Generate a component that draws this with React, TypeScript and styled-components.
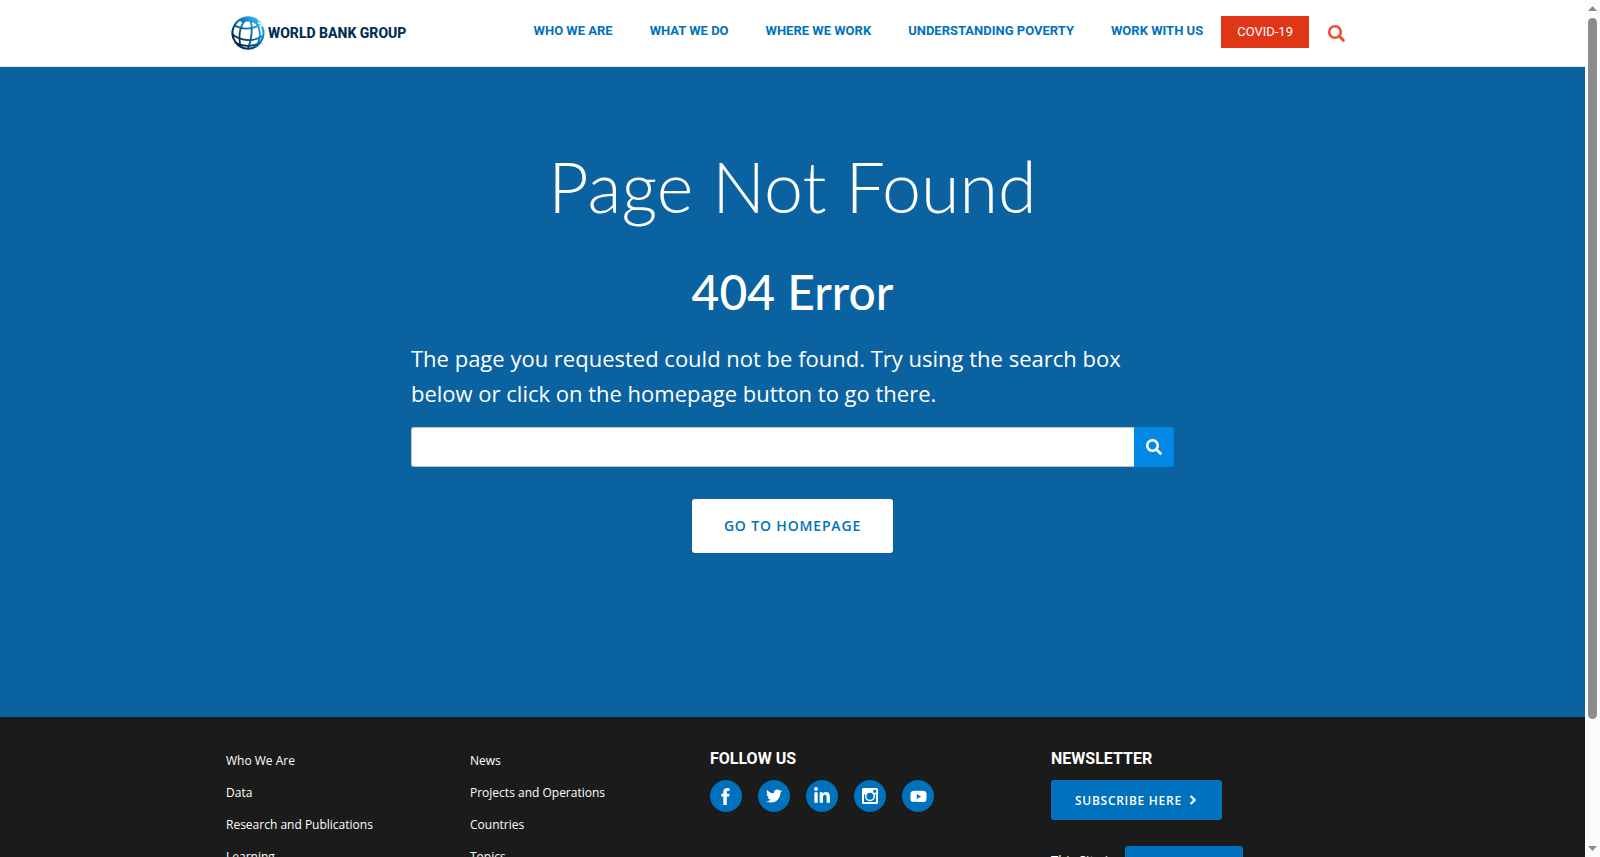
import React from 'react';
import styled, { createGlobalStyle } from 'styled-components';
import {
  FaChevronRight,
  FaLinkedinIn,
  FaSearch,
  FaTwitter,
  FaYoutube,
} from 'react-icons/fa';

const body = '"Open Sans", "Noto Sans", sans-serif';
const heading = 'Lato, "Open Sans", sans-serif';
const label = 'Roboto, "Open Sans", sans-serif';

const GlobalStyle = createGlobalStyle`
  *, *::before, *::after { box-sizing: border-box; }
  body { margin: 0; font-family: ${body}; color: #fff; background: #fff; }
  a { color: inherit; text-decoration: none; }
  h1, h2, p, ul { margin: 0; padding: 0; }
  ul { list-style: none; }
  button, input, select { font: inherit; }
`;

const Viewport = styled.div`
  display: flex;
  height: 100vh;
  overflow: hidden;
`;

const Page = styled.div`
  flex: 1;
  min-width: 0;
  overflow: hidden;
`;

const ScrollTrack = styled.div`
  width: 15px;
  display: flex;
  flex-direction: column;
  align-items: center;
  gap: 7px;
  padding: 6px 0;
  background: #fcfcfc;
`;

const ScrollThumb = styled.div`
  flex: 1;
  width: 9px;
  margin-bottom: 120px;
  border-radius: 5px;
  background: #8b8b8b;
`;

const Header = styled.header`
  background: #fff;
  border-bottom: 1px solid #e3e3e3;
`;

const Container = styled.div`
  width: 100%;
  max-width: 1133px;
  margin: 0 auto;
`;

const HeaderRow = styled(Container)`
  display: flex;
  align-items: flex-start;
  justify-content: space-between;
  height: 66px;
  padding: 16px 13px 0 4px;
`;

const Brand = styled.a`
  display: flex;
  align-items: center;
  gap: 2px;
  height: 34px;
  font: 800 14px/20px ${label};
  color: #002f54;
  white-space: nowrap;
`;

const Nav = styled.nav`
  display: flex;
  align-items: flex-start;
`;

const NavLink = styled.a`
  padding: 0 18px 0 19px;
  font: 700 13px/30px ${label};
  color: #0071bc;
  white-space: nowrap;
`;

const CovidLink = styled(NavLink)`
  padding: 0 16px;
  font-weight: 400;
  line-height: 32px;
  background: #e13517;
  color: #fff;
`;

const HeaderSearch = styled.button`
  display: flex;
  margin: 8px 0 0 18px;
  padding: 0;
  border: 0;
  background: none;
  color: #ee4d34;
`;

const Hero = styled.main`
  display: flex;
  justify-content: center;
  padding: 77px 24px 164px;
  background: #0a62a1;
`;

const HeroColumn = styled.div`
  width: 763px;
  display: flex;
  flex-direction: column;
  align-items: center;
`;

const Title = styled.h1`
  font: 300 70px/84px ${heading};
`;

const Subtitle = styled.h2`
  margin-top: 32px;
  font: 500 48px/64px ${heading};
`;

const Message = styled.p`
  align-self: stretch;
  margin-top: 17px;
  font-size: 22px;
  line-height: 35px;
`;

const SearchForm = styled.form`
  align-self: stretch;
  display: flex;
  height: 40px;
  margin-top: 16px;
`;

const SearchInput = styled.input`
  flex: 1;
  min-width: 0;
  padding: 0 12px;
  border: 1px solid #c4c4c4;
  border-right: 0;
  border-radius: 3px 0 0 3px;
  background: #fff;
  color: #333;
`;

const SearchButton = styled.button`
  display: flex;
  align-items: center;
  justify-content: center;
  width: 40px;
  padding: 0;
  border: 0;
  border-radius: 0 3px 3px 0;
  background: #0288e5;
  color: #fff;
  font-size: 16px;
`;

const HomeLink = styled.a`
  margin-top: 32px;
  padding: 0 32px;
  border-radius: 3px;
  background: #fff;
  color: #0071bc;
  font-size: 14px;
  font-weight: 600;
  line-height: 54px;
  letter-spacing: 0.06em;
`;

const Footer = styled.footer`
  background: #1b1b1b;
`;

const FooterGrid = styled(Container)`
  display: grid;
  grid-template-columns: 244fr 240fr 341fr 308fr;
  padding: 28px 0 32px;
`;

const LinkList = styled.ul`
  font-size: 12px;
  line-height: 32px;
`;

const FooterHeading = styled.h2`
  margin: 2px 0 9px;
  font: 700 16px/24px ${label};
`;

const SocialList = styled.ul`
  display: flex;
  gap: 16px;
`;

const SocialLink = styled.a<{ $size: number }>`
  display: flex;
  align-items: center;
  justify-content: center;
  width: 32px;
  height: 32px;
  border-radius: 50%;
  background: #0071bc;
  font-size: ${(p) => p.$size}px;
`;

const SubscribeLink = styled.a`
  display: inline-flex;
  align-items: center;
  gap: 6px;
  height: 40px;
  padding: 0 24px;
  border-radius: 3px;
  background: #0071bc;
  font-size: 12px;
  font-weight: 600;
  letter-spacing: 0.06em;

  svg { font-size: 10px; stroke: currentColor; stroke-width: 40px; }
`;

const LanguageRow = styled.div`
  display: flex;
  align-items: flex-start;
  gap: 6px;
  margin-top: 26px;
  font-size: 13px;
  line-height: 28px;
`;

const LanguageSelect = styled.select`
  width: 118px;
  height: 40px;
  padding: 0 12px;
  border: 0;
  border-radius: 3px;
  background: #0071bc;
  color: #fff;
`;

const Globe = () => (
  <svg width="36" height="34" viewBox="0 0 36 34" fill="none" aria-hidden="true">
    <defs>
      <linearGradient id="globe" x1="27" y1="5" x2="7" y2="24" gradientUnits="userSpaceOnUse">
        <stop offset="0" stopColor="#2cb4ea" />
        <stop offset="0.4" stopColor="#0b76b4" />
        <stop offset="1" stopColor="#002b4d" />
      </linearGradient>
      <linearGradient id="rim" x1="34" y1="8" x2="16" y2="34" gradientUnits="userSpaceOnUse">
        <stop offset="0" stopColor="#2cb4ea" />
        <stop offset="0.5" stopColor="#0d7cba" />
        <stop offset="1" stopColor="#002b4d" />
      </linearGradient>
    </defs>
    <path d="M10 3.200C16 -.2 24 .2 29 4.800L27 9C23 5.500 18 4.600 11 6.500Z" fill="url(#globe)" />
    <g stroke="url(#globe)" strokeWidth="1.800">
      <path d="M27 4A15.700 15.700 0 1 0 18 32.700" strokeWidth="2.100" />
      <path d="M18 2C10 8 8 18 10.500 30.500" />
      <path d="M20 2C23 11 22 23 18 32.500" />
      <path d="M22 3C31 9 32 22 26 30.500" />
      <path d="M4 9C12 14 22 14 30 8.500" />
      <path d="M2 18C10 25 24 26.500 33 19.500" />
      <path d="M6 27C13 31 23 31 30 26.500" />
    </g>
    <path d="M32 10.500A15.700 15.700 0 0 1 18 32.700" stroke="url(#rim)" strokeWidth="2.100" />
    <path d="M28.500 4.500l2 1-1 2M31 7.500l1.500 1.500M29 9.500l1 1.500" stroke="#8bd5f2" strokeWidth="1.200" />
  </svg>
);

const HeaderSearchIcon = () => (
  <svg width="19" height="19" viewBox="0 0 19 19" fill="none" stroke="currentColor" aria-hidden="true">
    <circle cx="8" cy="8" r="5.800" strokeWidth="2.600" />
    <path d="M12.300 12.300L16.300 16.300" strokeWidth="3" strokeLinecap="round" />
  </svg>
);

const FacebookIcon = () => (
  <svg width="10" height="17" viewBox="0 0 10 17" fill="currentColor" aria-hidden="true">
    <path d="M8.500 3H7C6 3 5.800 3.500 5.800 4.300V5.800H8.500L8.200 8.600H5.800V17H2.300V8.600H.3V5.800H2.300V4C2.300 1.400 3.700.1 6.200.1C7.300.1 8 .1 8.500.2Z" />
  </svg>
);

const InstagramIcon = () => (
  <svg width="16" height="16" viewBox="0 0 16 16" aria-hidden="true">
    <rect width="16" height="16" rx="1.500" fill="#fff" />
    <path d="M2 6.500H4.200A4.300 4.300 0 1 0 11.800 6.500H14V14H2Z" fill="#0071bc" />
    <circle cx="8" cy="8.300" r="5" fill="#fff" />
    <circle cx="8" cy="8.300" r="3.500" fill="#0071bc" />
    <rect x="11.300" y="1.800" width="2.900" height="2.900" rx="0.500" fill="#0071bc" />
  </svg>
);

const navItems = ['WHO WE ARE', 'WHAT WE DO', 'WHERE WE WORK', 'UNDERSTANDING POVERTY', 'WORK WITH US'];

const linkColumns = [
  ['Who We Are', 'Data', 'Research and Publications', 'Learning'],
  ['News', 'Projects and Operations', 'Countries', 'Topics'],
];

const socials = [
  { name: 'Facebook', icon: <FacebookIcon />, size: 17 },
  { name: 'Twitter', icon: <FaTwitter />, size: 16 },
  { name: 'LinkedIn', icon: <FaLinkedinIn />, size: 18 },
  { name: 'Instagram', icon: <InstagramIcon />, size: 16 },
  { name: 'YouTube', icon: <FaYoutube />, size: 17 },
];

export default function App() {
  return (
    <>
      <GlobalStyle />
      <Viewport>
        <Page>
          <Header>
            <HeaderRow>
              <Brand href="#">
                <Globe />
                WORLD BANK GROUP
              </Brand>
              <Nav aria-label="Main">
                {navItems.map((item) => (
                  <NavLink href="#" key={item}>{item}</NavLink>
                ))}
                <CovidLink href="#">COVID-19</CovidLink>
                <HeaderSearch type="button" aria-label="Search">
                  <HeaderSearchIcon />
                </HeaderSearch>
              </Nav>
            </HeaderRow>
          </Header>

          <Hero>
            <HeroColumn>
              <Title>Page Not Found</Title>
              <Subtitle>404 Error</Subtitle>
              <Message>
                The page you requested could not be found. Try using the search box below or click on
                the homepage button to go there.
              </Message>
              <SearchForm role="search" onSubmit={(e) => e.preventDefault()}>
                <SearchInput type="text" aria-label="Search the site" />
                <SearchButton type="submit" aria-label="Submit search">
                  <FaSearch />
                </SearchButton>
              </SearchForm>
              <HomeLink href="#">GO TO HOMEPAGE</HomeLink>
            </HeroColumn>
          </Hero>

          <Footer>
            <FooterGrid>
              {linkColumns.map((links) => (
                <LinkList key={links[0]}>
                  {links.map((link) => (
                    <li key={link}><a href="#">{link}</a></li>
                  ))}
                </LinkList>
              ))}
              <section>
                <FooterHeading>FOLLOW US</FooterHeading>
                <SocialList>
                  {socials.map(({ name, icon, size }) => (
                    <li key={name}>
                      <SocialLink href="#" aria-label={name} $size={size}>{icon}</SocialLink>
                    </li>
                  ))}
                </SocialList>
              </section>
              <section>
                <FooterHeading>NEWSLETTER</FooterHeading>
                <SubscribeLink href="#">
                  SUBSCRIBE HERE
                  <FaChevronRight />
                </SubscribeLink>
                <LanguageRow>
                  <label htmlFor="language">This Site in:</label>
                  <LanguageSelect id="language">
                    <option>English</option>
                  </LanguageSelect>
                </LanguageRow>
              </section>
            </FooterGrid>
          </Footer>
        </Page>

        <ScrollTrack aria-hidden="true">
          <svg width="9" height="5" viewBox="0 0 9 5"><path d="M0 5L4.500 0L9 5Z" fill="#8b8b8b" /></svg>
          <ScrollThumb />
          <svg width="9" height="5" viewBox="0 0 9 5"><path d="M0 0L4.500 5L9 0Z" fill="#8b8b8b" /></svg>
        </ScrollTrack>
      </Viewport>
    </>
  );
}
